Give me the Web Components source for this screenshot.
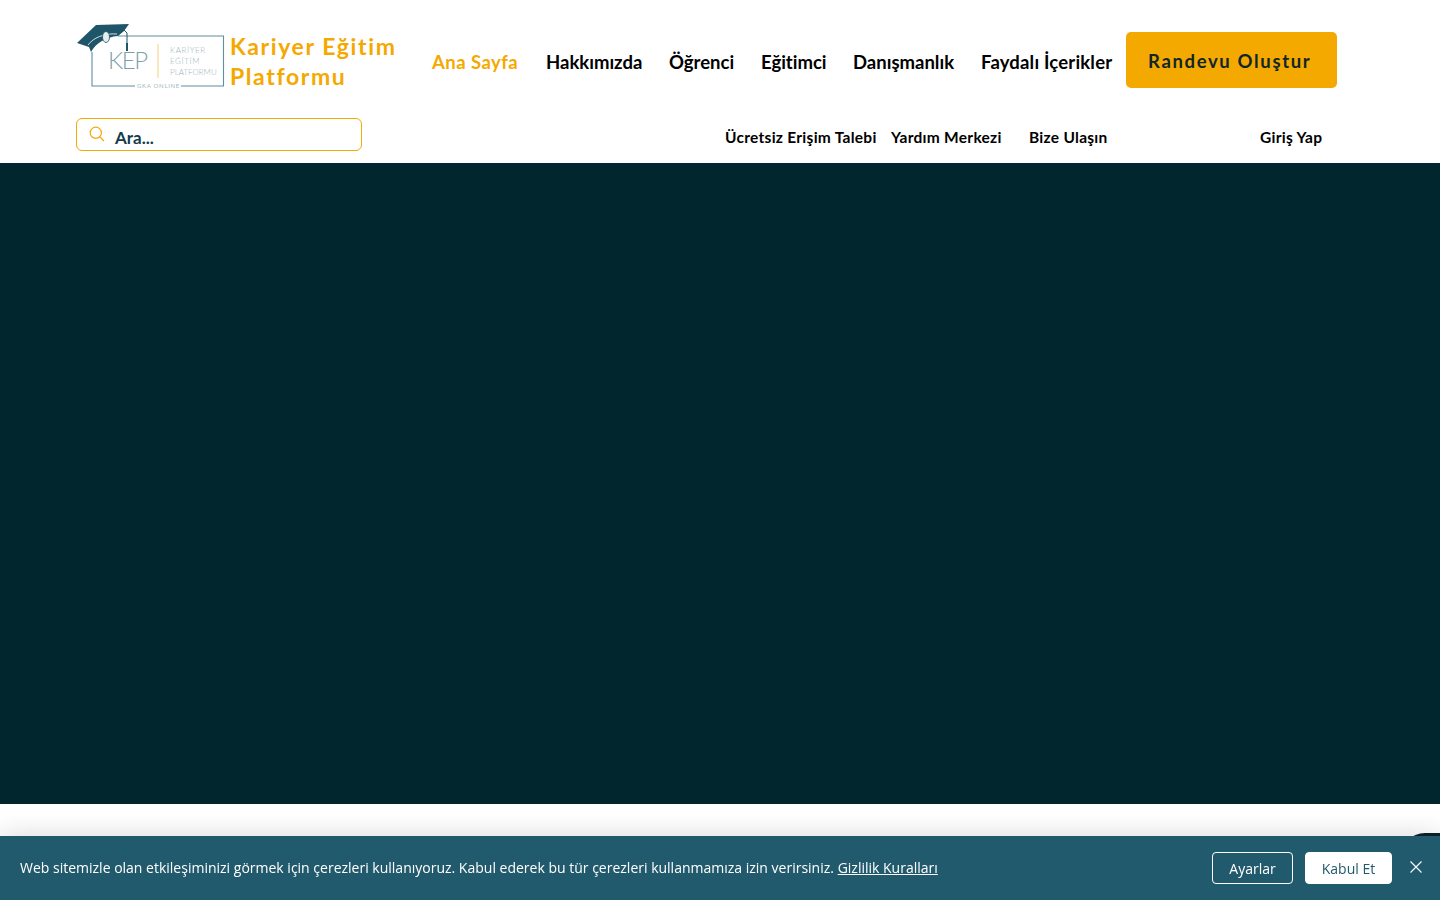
<!DOCTYPE html>
<html lang="tr">
<head>
<meta charset="utf-8">
<title>Kariyer Eğitim Platformu</title>
<style>
  html, body { margin: 0; height: 100%; overflow: hidden; background: #fff; }
</style>
</head>
<body>
<site-header></site-header>
<hero-band></hero-band>
<chat-bubble></chat-bubble>
<cookie-bar></cookie-bar>

<script>
class KepLogo extends HTMLElement {
  connectedCallback() {
    this.attachShadow({ mode: 'open' });
    this.shadowRoot.innerHTML = `
      <style>
        :host { display: block; width: 150px; height: 72px; flex: none; }
        svg { display: block; }
        text { font-family: Lato, sans-serif; }
      </style>
      <svg width="150" height="72" viewBox="76 22 150 72">
        <path d="M92 52V86H135M181 86H223.500V36H118" fill="none" stroke="#5f8fa0" stroke-width="1.100"/>
        <path d="M77 43L96 25L129 24L124 31L118 36C106 37 96 43 91 52L89 47Z" fill="#1f5569"/>
        <path d="M88 45C93 38 104 33 117 34" fill="none" stroke="#fff" stroke-width=".8"/>
        <ellipse cx="106" cy="37" rx="3.500" ry="5.500" fill="#e6eef0" stroke="#1f5569" stroke-width=".8"/>
        <path d="M124 30L127 33V44" fill="none" stroke="#1f5569" stroke-width="1"/>
        <path d="M127 43V51" stroke="#1f5569" stroke-width="2"/>
        <path d="M158 44V78" stroke="#f7d98f" stroke-width="1.200"/>
        <text x="108" y="69" font-size="24" font-weight="300" fill="#7c9fac" textLength="40">KEP</text>
        <text x="170" y="53" font-size="8" font-weight="300" fill="#9db3bc" letter-spacing=".6">KARİYER</text>
        <text x="170" y="64" font-size="8" font-weight="300" fill="#9db3bc" letter-spacing=".6">EĞİTİM</text>
        <text x="170" y="75" font-size="8" font-weight="300" fill="#9db3bc" letter-spacing=".3" textLength="47">PLATFORMU</text>
        <text x="137" y="88" font-size="6" fill="#a5b8c0" letter-spacing=".7" textLength="43">GKA ONLINE</text>
      </svg>`;
  }
}
customElements.define('kep-logo', KepLogo);

class NavLink extends HTMLElement {
  connectedCallback() {
    this.attachShadow({ mode: 'open' });
    this.shadowRoot.innerHTML = `
      <style>
        :host { display: block; color: #000; white-space: nowrap; cursor: pointer; font-variant-ligatures: none; }
        :host([active]) { color: #f4a900; letter-spacing: .45px; }
        :host([wide]) { letter-spacing: .18px; }
      </style>
      <slot></slot>`;
  }
}
customElements.define('nav-link', NavLink);

class SearchBox extends HTMLElement {
  connectedCallback() {
    this.attachShadow({ mode: 'open' });
    this.shadowRoot.innerHTML = `
      <style>
        :host { display: flex; align-items: center; box-sizing: border-box; width: 286px; height: 33px;
                border: 1px solid #f4a900; border-radius: 6px; padding-left: 12px; gap: 10px; }
        span { font: 700 17px Lato, sans-serif; color: #153b4a; padding-top: 6px; }
        svg { display: block; margin-top: -2px; }
      </style>
      <svg width="16" height="16" viewBox="0 0 16 16" fill="none" stroke="#f4a900" stroke-width="1.200">
        <circle cx="6.800" cy="6.800" r="5.600"/><path d="M10.800 10.800L15 15"/>
      </svg>
      <span>Ara...</span>`;
  }
}
customElements.define('search-box', SearchBox);

class SiteHeader extends HTMLElement {
  connectedCallback() {
    this.attachShadow({ mode: 'open' });
    this.shadowRoot.innerHTML = `
      <style>
        :host { display: block; height: 163px; background: #fff; box-sizing: border-box; padding: 22px 0 0 76px;
                font-family: Lato, sans-serif; font-variant-ligatures: none; }
        .top { display: flex; align-items: flex-start; }
        .brand { width: 176px; margin: 9px 0 0 4px; font-size: 23px; font-weight: 700; line-height: 30px;
                 letter-spacing: 1.600px; color: #f4a900; }
        .nav { display: grid; grid-template-columns: 86px 95px 64px 64px 100px 131px; column-gap: 28px;
               margin: 28px 0 0 26px; font-size: 18.500px; font-weight: 700; line-height: 24px; }
        .cta { margin: 10px 0 0 14px; width: 211px; height: 56px; box-sizing: border-box; border-radius: 5px;
               background: #f4a900; color: #10262d; font-size: 18.500px; font-weight: 700; letter-spacing: 1.650px;
               line-height: 58px; padding-left: 22px; white-space: nowrap; }
        .bottom { display: flex; align-items: center; margin-top: 24px; }
        .links { display: flex; font-size: 15.500px; font-weight: 700; line-height: 20px; letter-spacing: .27px; margin: 5px 0 0 363px; }
        .links nav-link:nth-child(1) { width: 166px; }
        .links nav-link:nth-child(2) { width: 138px; }
        .links nav-link:nth-child(3) { width: 231px; }
      </style>
      <div class="top">
        <kep-logo></kep-logo>
        <div class="brand">Kariyer Eğitim Platformu</div>
        <div class="nav">
          <nav-link active>Ana Sayfa</nav-link>
          <nav-link>Hakkımızda</nav-link>
          <nav-link>Öğrenci</nav-link>
          <nav-link>Eğitimci</nav-link>
          <nav-link>Danışmanlık</nav-link>
          <nav-link wide>Faydalı İçerikler</nav-link>
        </div>
        <div class="cta">Randevu Oluştur</div>
      </div>
      <div class="bottom">
        <search-box></search-box>
        <div class="links">
          <nav-link>Ücretsiz Erişim Talebi</nav-link>
          <nav-link>Yardım Merkezi</nav-link>
          <nav-link>Bize Ulaşın</nav-link>
          <nav-link>Giriş Yap</nav-link>
        </div>
      </div>`;
  }
}
customElements.define('site-header', SiteHeader);

class HeroBand extends HTMLElement {
  connectedCallback() {
    this.attachShadow({ mode: 'open' });
    this.shadowRoot.innerHTML = `
      <style>
        :host { display: block; height: 641px; background: #01262e; }
      </style>`;
  }
}
customElements.define('hero-band', HeroBand);

class ChatBubble extends HTMLElement {
  connectedCallback() {
    this.attachShadow({ mode: 'open' });
    this.shadowRoot.innerHTML = `
      <style>
        :host { position: fixed; left: 1400px; top: 833px; width: 80px; height: 50px; border-radius: 25px; background: #0d2328; }
      </style>`;
  }
}
customElements.define('chat-bubble', ChatBubble);

class CookieBar extends HTMLElement {
  connectedCallback() {
    this.attachShadow({ mode: 'open' });
    this.shadowRoot.innerHTML = `
      <style>
        :host { position: fixed; left: 0; right: 0; bottom: 0; height: 64px; box-sizing: border-box; padding: 0 18px 0 20px;
                display: flex; align-items: center; background: #225a6d; color: #fff;
                font: 14px/20px "Open Sans", sans-serif; box-shadow: 0 0 28px rgba(0,0,0,.16); }
        p { margin: 0; flex: 1; white-space: nowrap; }
        a { color: inherit; text-decoration: underline; }
        button { font: inherit; box-sizing: border-box; height: 32px; border-radius: 4px; border: 1px solid #fff; padding: 2px 0 0; cursor: pointer; }
        .ghost { width: 81px; background: transparent; color: #fff; }
        .solid { width: 87px; background: #fff; color: #225a6d; margin-left: 12px; }
        svg { display: block; margin: -2px 0 0 18px; }
      </style>
      <p>Web sitemizle olan etkileşiminizi görmek için çerezleri kullanıyoruz. Kabul ederek bu tür çerezleri kullanmamıza izin verirsiniz. <a href="#">Gizlilik Kuralları</a></p>
      <button class="ghost">Ayarlar</button>
      <button class="solid">Kabul Et</button>
      <svg width="12" height="12" viewBox="0 0 12 12" stroke="#fff" stroke-width="1.100" fill="none"><path d="M.5.5L11.500 11.500M11.500.5L.5 11.500"/></svg>`;
  }
}
customElements.define('cookie-bar', CookieBar);
</script>
</body>
</html>
